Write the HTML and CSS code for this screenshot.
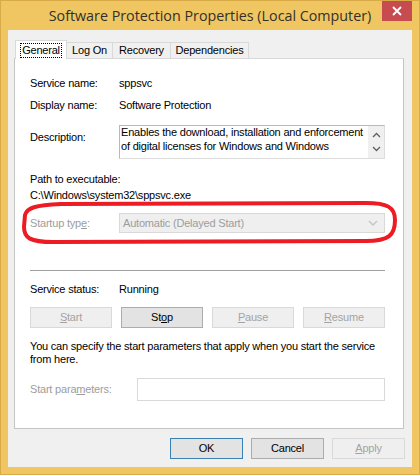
FILE: index.html
```html
<!DOCTYPE html>
<html lang="en">
<head>
    <meta charset="UTF-8">
    <title>Software Protection Properties</title>
    <link rel="stylesheet" href="styles.css">
</head>
<body>
    <div class="window">
        <div class="titlebar">
            <div class="title">Software Protection Properties (Local Computer)</div>
            <div class="close-btn">
                <svg width="30" height="20" viewBox="0 0 30 20">
                    <path d="M11 6 L19 14 M19 6 L11 14" stroke="#fff" stroke-width="1.8" fill="none"/>
                </svg>
            </div>
        </div>

        <div class="client">
            <div class="tabs">
                <div class="tab active"><span class="focus">General</span></div>
                <div class="tab tab-logon">Log On</div>
                <div class="tab tab-recovery">Recovery</div>
                <div class="tab tab-deps">Dependencies</div>
            </div>

            <div class="panel">
                <div class="row row-name">
                    <span>Service name:</span>
                    <span>sppsvc</span>
                </div>
                <div class="row row-display">
                    <span>Display name:</span>
                    <span>Software Protection</span>
                </div>
                <div class="row row-desc">
                    <span class="desc-label">Description:</span>
                    <div class="desc-box">
                        <div class="desc-text">Enables the download, installation and enforcement of digital licenses for Windows and Windows</div>
                        <div class="desc-scroll">
                            <svg width="9" height="6" viewBox="0 0 9 6"><path d="M1 5 L4.5 1.5 L8 5" stroke="#606060" stroke-width="1.3" fill="none"/></svg>
                            <svg width="9" height="6" viewBox="0 0 9 6"><path d="M1 1 L4.5 4.5 L8 1" stroke="#606060" stroke-width="1.3" fill="none"/></svg>
                        </div>
                    </div>
                </div>
                <div class="path-label">Path to executable:</div>
                <div class="path-value">C:\Windows\system32\sppsvc.exe</div>
                <div class="row row-startup disabled">
                    <span>Startup typ<u>e</u>:</span>
                    <div class="combo">
                        <span>Automatic (Delayed Start)</span>
                        <svg width="10" height="6" viewBox="0 0 10 6"><path d="M1 1 L5 5 L9 1" stroke="#c4c4c4" stroke-width="1.4" fill="none"/></svg>
                    </div>
                </div>
                <div class="separator"></div>
                <div class="row row-status">
                    <span>Service status:</span>
                    <span>Running</span>
                </div>
                <div class="service-buttons">
                    <div class="btn disabled"><u>S</u>tart</div>
                    <div class="btn">St<u>o</u>p</div>
                    <div class="btn disabled"><u>P</u>ause</div>
                    <div class="btn disabled"><u>R</u>esume</div>
                </div>
                <p class="hint">You can specify the start parameters that apply when you start the service from here.</p>
                <div class="row row-params disabled">
                    <span>Start para<u>m</u>eters:</span>
                    <div class="params-input"></div>
                </div>

                <svg class="marker" width="378" height="46" viewBox="0 0 378 46">
                    <path d="M4 15 C6 8, 14 5, 40 4 L345 3 C366 3, 374 7, 374 20 C374 35, 368 41, 345 41 L32 42 C9 42, 3 38, 3 27 L4 15" stroke="#ed1c24" stroke-width="4" fill="none" stroke-linejoin="round" stroke-linecap="round"/>
                </svg>
            </div>

            <div class="dialog-buttons">
                <div class="btn btn-ok">OK</div>
                <div class="btn">Cancel</div>
                <div class="btn disabled"><u>A</u>pply</div>
            </div>
        </div>
    </div>
</body>
</html>
```

FILE: styles.css
```css
body {
    margin: 0;
    padding: 0;
    font-family: "Liberation Sans", Arial, sans-serif;
    font-size: 11px;
    letter-spacing: -0.2px;
    color: #000;
}

.window {
    width: 420px;
    height: 475px;
    box-sizing: border-box;
    background: #efc662;
    border: 1px solid #d9ab48;
    display: flex;
    flex-direction: column;
}

.titlebar {
    height: 29px;
    display: flex;
    padding: 0 7px;
    flex-shrink: 0;
}

.title {
    flex: 1;
    padding-left: 30px;
    text-align: center;
    line-height: 30px;
    font-family: "Open Sans", "Noto Sans", sans-serif;
    font-size: 14.3px;
    letter-spacing: 0;
    color: #33302a;
}

.close-btn {
    width: 30px;
    height: 20px;
    background: #c74c4f;
    flex-shrink: 0;
}

.close-btn svg {
    display: block;
}

.client {
    margin: 0 7px 7px;
    height: 437px;
    background: #f0f0f0;
    padding: 10px 7px 0 6px;
    box-sizing: border-box;
}

/* tabs */
.tabs {
    display: flex;
    align-items: flex-end;
    padding-left: 1px;
    height: 18px;
}

.tab {
    box-sizing: border-box;
    height: 16px;
    border: 1px solid #d9d9d9;
    border-bottom: none;
    margin-left: -1px;
    background: #f0f0f0;
    text-align: center;
    line-height: 15px;
}

.tab.active {
    width: 52px;
    height: 19px;
    margin-left: 0;
    margin-bottom: -1px;
    background: #fff;
    position: relative;
    z-index: 1;
    padding-top: 2px;
    line-height: 14px;
}

.tab-logon { width: 47px; }
.tab-recovery { width: 59px; }
.tab-deps { width: 79px; }

.focus {
    display: inline-block;
    border: 1px dotted #000;
    padding: 0 1px;
    line-height: 13px;
}

/* main panel */
.panel {
    position: relative;
    width: 390px;
    height: 371px;
    box-sizing: border-box;
    background: #fff;
    border: 1px solid #c4c4c4;
    border-top-color: #d9d9d9;
    padding: 0 18px 0 15px;
    display: flex;
    flex-direction: column;
}

.row {
    display: grid;
    grid-template-columns: 89px 1fr;
    line-height: 16px;
}

.row-name { margin-top: 16px; }
.row-display { margin-top: 6px; }
.row-desc { margin-top: 12px; }

.desc-label {
    padding-top: 4px;
}

.desc-box {
    height: 34px;
    box-sizing: border-box;
    border: 1px solid #b9b9b9;
    border-right-color: #dcdcdc;
    border-bottom-color: #dcdcdc;
    display: flex;
}

.desc-text {
    flex: 1;
    line-height: 14px;
    margin-top: -1px;
    padding: 0 1px 0 1px;
}

.desc-scroll {
    width: 16px;
    background: #f0f0f0;
    display: flex;
    flex-direction: column;
    justify-content: space-around;
    align-items: center;
    padding: 2px 0;
}

.desc-scroll svg {
    display: block;
}

.path-label {
    margin-top: 12px;
    line-height: 16px;
}

.path-value {
    line-height: 16px;
}

.disabled {
    color: #9d9d9d;
}

.row-startup {
    margin-top: 10px;
    line-height: 20px;
}

.combo {
    height: 20px;
    box-sizing: border-box;
    border: 1px solid #d9d9d9;
    background: #efefef;
    display: flex;
    align-items: center;
    justify-content: space-between;
    padding: 0 6px 0 3px;
    line-height: 18px;
}

.separator {
    margin-top: 37px;
    height: 1px;
    background: #a0a0a0;
}

.row-status { margin-top: 10px; }

.service-buttons {
    margin-top: 10px;
    display: grid;
    grid-template-columns: repeat(4, 82px);
    column-gap: 9px;
}

.btn {
    height: 21px;
    box-sizing: border-box;
    border: 1px solid #acacac;
    background: #e3e3e3;
    text-align: center;
    line-height: 19px;
}

.btn.disabled {
    border-color: #d9d9d9;
    background: #efefef;
    color: #a3a3a3;
}

.hint {
    margin: 12px 0 0;
    line-height: 13px;
}

.row-params {
    margin-top: 12px;
    grid-template-columns: 107px 1fr;
    line-height: 23px;
}

.params-input {
    height: 23px;
    box-sizing: border-box;
    border: 1px solid #d9d9d9;
    background: #fff;
}

.marker {
    position: absolute;
    left: 6px;
    top: 141px;
}

/* dialog buttons */
.dialog-buttons {
    display: flex;
    justify-content: flex-end;
    gap: 8px;
    margin-top: 9px;
}

.dialog-buttons .btn {
    width: 73px;
}

.btn-ok {
    border-color: #3c7fb1;
}
```
